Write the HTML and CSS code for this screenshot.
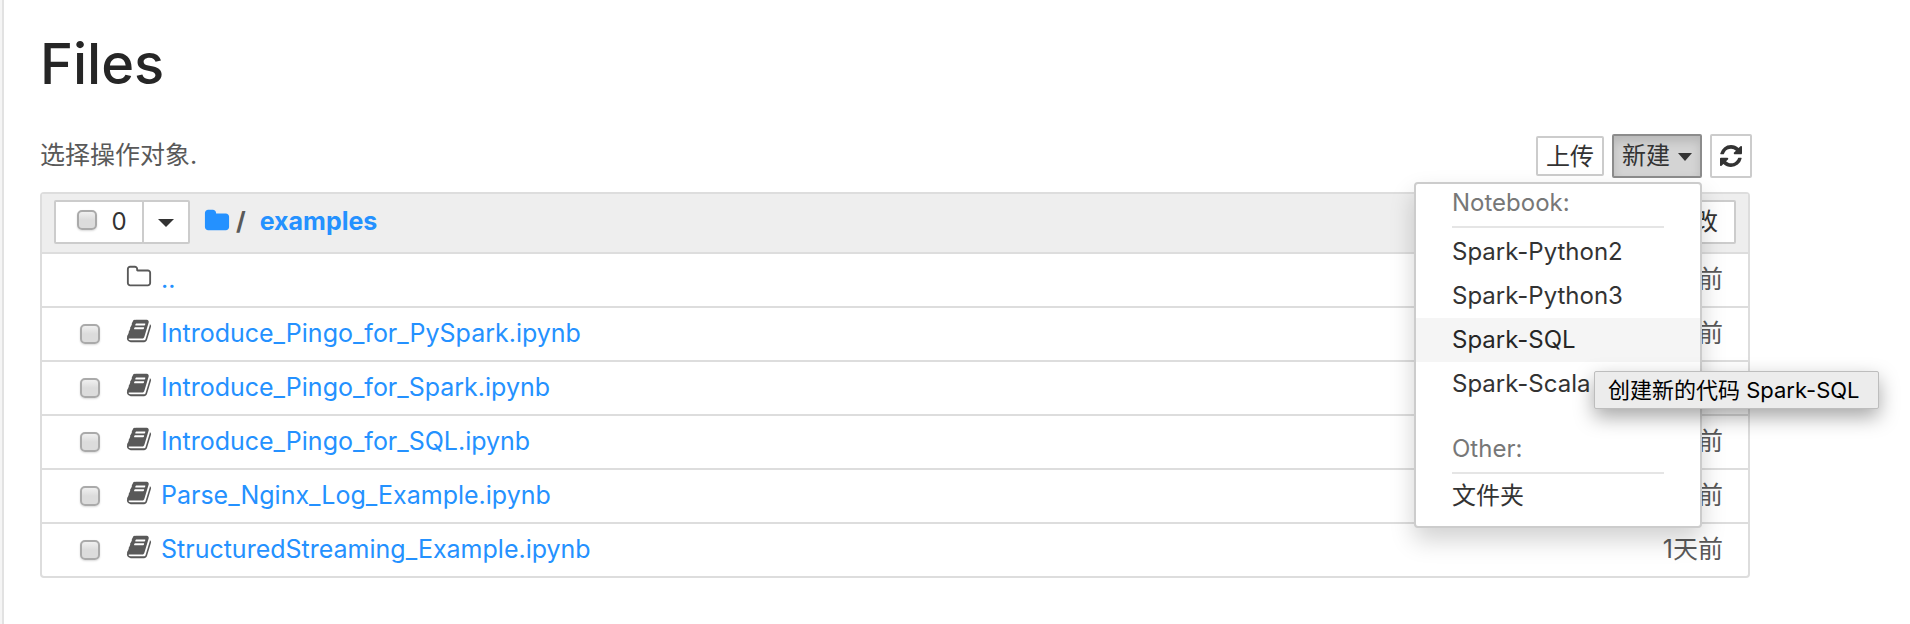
FILE: index.html
```html
<!DOCTYPE html>
<html lang="zh-CN">
<head>
<meta charset="utf-8">
<title>Files</title>
<link rel="stylesheet" href="styles.css">
</head>
<body>
<svg class="sprite" aria-hidden="true">
  <symbol id="folder" viewBox="0 0 1792 1792"><path d="M1728 608v704q0 92-66 158t-158 66h-1216q-92 0-158-66t-66-158v-960q0-92 66-158t158-66h320q92 0 158 66t66 158v32h672q92 0 158 66t66 158z"/></symbol>
  <symbol id="folder-open" viewBox="0 0 1792 1792"><path d="M1600 1312v-704q0-40-28-68t-68-28h-704q-40 0-68-28t-28-68v-64q0-40-28-68t-68-28h-320q-40 0-68 28t-28 68v960q0 40 28 68t68 28h1216q40 0 68-28t28-68zm128-704v704q0 92-66 158t-158 66h-1216q-92 0-158-66t-66-158v-960q0-92 66-158t158-66h320q92 0 158 66t66 158v32h672q92 0 158 66t66 158z"/></symbol>
  <symbol id="book" viewBox="0 0 1792 1792"><path d="M1703 478q40 57 18 129l-275 906q-19 64-76.500 107.500t-122.500 43.500h-923q-77 0-148.500-53.500t-99.500-131.500q-24-67-2-127 0-4 3-27t4-37q1-8-3-21.500t-3-19.500q2-11 8-21t16.500-23.500 16.500-23.500q23-38 45-91.500t30-91.500q3-10 .5-30t-.5-28q3-11 17-28t17-23q21-36 42-92t25-90q1-9-2.500-32t.5-28q4-13 22-30.500t22-22.500q19-26 42.500-84.500t27.500-96.500q1-8-3-25.500t-2-26.500q2-8 9-18t18-23 17-21q8-12 16.500-30.500t15-35 16-36 19.500-32 26.500-23.500 36-11.500 47.500 5.500l-1 3q38-9 51-9h761q74 0 114 56t18 130l-274 906q-36 119-71.500 153.500t-128.500 34.500h-869q-27 0-38 15-11 16-1 43 24 70 144 70h923q29 0 56-15.500t35-41.500l300-987q7-22 5-57 38 15 59 43zm-1064 2q-4 13 2 22.500t20 9.500h608q13 0 25.500-9.500t16.500-22.500l21-64q4-13-2-22.500t-20-9.500h-608q-13 0-25.500 9.500t-16.500 22.500zm-83 256q-4 13 2 22.500t20 9.500h608q13 0 25.500-9.500t16.500-22.500l21-64q4-13-2-22.500t-20-9.500h-608q-13 0-25.500 9.500t-16.500 22.500z"/></symbol>
  <symbol id="refresh" viewBox="0 0 1536 1536"><path d="M1511 928q0 5-1 7-64 268-268 434.500t-478 166.500q-146 0-282.500-55t-243.500-157l-129 129q-19 19-45 19t-45-19-19-45v-448q0-26 19-45t45-19h448q26 0 45 19t19 45-19 45l-137 137q71 66 161 102t187 36q134 0 250-65t186-179q11-17 53-117 8-23 30-23h192q13 0 22.500 9.500t9.500 22.500zm25-800v448q0 26-19 45t-45 19h-448q-26 0-45-19t-19-45 19-45l138-138q-148-137-349-137-134 0-250 65t-186 179q-11 17-53 117-8 23-30 23h-199q-13 0-22.500-9.500t-9.500-22.500v-7q65-268 270-434.500t480-166.500q146 0 284 55.500t245 156.500l130-129q19-19 45-19t45 19 19 45z"/></symbol>
</svg>
<main class="page">
  <h1 class="title">Files</h1>
  <div class="toolbar">
    <p class="hint">选择操作对象.</p>
    <div class="actions">
      <button class="btn btn-upload" type="button">上传</button>
      <div class="dropdown">
        <button class="btn btn-new" type="button" aria-expanded="true">新建<span class="caret"></span></button>
        <div class="menu">
          <div class="menu-head">Notebook:</div>
          <button class="menu-item" type="button">Spark-Python2</button>
          <button class="menu-item" type="button">Spark-Python3</button>
          <div class="menu-entry">
            <button class="menu-item is-hover" type="button" aria-describedby="tip">Spark-SQL</button>
            <div class="tip" id="tip" role="tooltip">创建新的代码 Spark-SQL</div>
          </div>
          <button class="menu-item" type="button">Spark-Scala</button>
          <div class="menu-head menu-head-other">Other:</div>
          <button class="menu-item" type="button">文件夹</button>
        </div>
      </div>
      <button class="btn btn-refresh" type="button" aria-label="刷新"><svg class="icon-refresh"><use href="#refresh"/></svg></button>
    </div>
  </div>
  <section class="list">
    <header class="list-head">
      <div class="select-group">
        <label class="btn select-all"><input class="check" type="checkbox"><span>0</span></label>
        <button class="btn select-menu" type="button" aria-label="选择"><span class="caret"></span></button>
      </div>
      <nav class="crumbs">
        <a href="#" aria-label="根目录"><svg class="icon"><use href="#folder"/></svg></a>
        <span class="slash">/</span>
        <a class="crumb" href="#">examples</a>
      </nav>
      <button class="btn sort" type="button">最后修改</button>
    </header>
    <div class="row"><span class="no-check"></span><svg class="icon"><use href="#folder-open"/></svg><a class="name" href="#">..</a><span class="time">1天前</span></div>
    <div class="row"><input class="check" type="checkbox" aria-label="Introduce_Pingo_for_PySpark.ipynb"><svg class="icon book"><use href="#book"/></svg><a class="name" href="#">Introduce_Pingo_for_PySpark.ipynb</a><span class="time">1天前</span></div>
    <div class="row"><input class="check" type="checkbox" aria-label="Introduce_Pingo_for_Spark.ipynb"><svg class="icon book"><use href="#book"/></svg><a class="name" href="#">Introduce_Pingo_for_Spark.ipynb</a><span class="time">1天前</span></div>
    <div class="row"><input class="check" type="checkbox" aria-label="Introduce_Pingo_for_SQL.ipynb"><svg class="icon book"><use href="#book"/></svg><a class="name" href="#">Introduce_Pingo_for_SQL.ipynb</a><span class="time">1天前</span></div>
    <div class="row"><input class="check" type="checkbox" aria-label="Parse_Nginx_Log_Example.ipynb"><svg class="icon book"><use href="#book"/></svg><a class="name" href="#">Parse_Nginx_Log_Example.ipynb</a><span class="time">1天前</span></div>
    <div class="row"><input class="check" type="checkbox" aria-label="StructuredStreaming_Example.ipynb"><svg class="icon book"><use href="#book"/></svg><a class="name" href="#">StructuredStreaming_Example.ipynb</a><span class="time">1天前</span></div>
  </section>
</main>
</body>
</html>
```

FILE: styles.css
```css
* { box-sizing: border-box; }
body {
  margin: 0;
  background: #f5f5f5;
  color: #595959;
  font: 25px/36px Inter, "Noto Sans CJK SC", sans-serif;
}
button { font: inherit; cursor: pointer; }
a { color: #2491ff; text-decoration: none; }
.sprite { position: absolute; width: 0; height: 0; }
.page {
  min-height: 100vh;
  margin-left: 2px;
  padding: 24px 158px 40px 36px;
  border-left: 2px solid #e2e2e2;
  background: #fff;
}
.title {
  margin: 0 0 30px;
  color: #262626;
  font-size: 56px;
  font-weight: 500;
  line-height: 80px;
}
.toolbar {
  display: flex;
  justify-content: space-between;
  align-items: center;
  height: 44px;
  margin-bottom: 14px;
}
.hint { margin: 0; padding-bottom: 2px; }
.actions { display: flex; align-items: center; gap: 8px; }
.btn {
  display: flex;
  align-items: center;
  justify-content: center;
  height: 44px;
  padding: 0 10px;
  border: 2px solid #ccc;
  border-radius: 2px;
  background: #fff;
  color: #333;
  font-size: 24px;
  line-height: 36px;
}
.btn-upload { height: 40px; padding: 2px 8px 0; }
.btn-new {
  gap: 8px;
  padding: 0 8px;
  border-color: #8c8c8c;
  background: #d4d4d4;
  box-shadow: inset 0 6px 10px rgba(0, 0, 0, .125);
}
.btn-refresh { width: 42px; padding: 0; }
.icon-refresh { width: 22px; height: 22px; fill: #333; }
.caret {
  margin-top: 2px;
  border: 8px solid transparent;
  border-top-color: #333;
  border-bottom: 0;
}
.btn-new .caret { border-width: 8px 7px 0; }
.dropdown { position: relative; }
.menu {
  position: absolute;
  z-index: 2;
  top: 48px;
  right: 0;
  width: 288px;
  padding-bottom: 8px;
  border: 2px solid #ccc;
  border-radius: 4px;
  background: #fff;
  background-clip: padding-box;
  box-shadow: 0 12px 24px rgba(0, 0, 0, .18);
  font-size: 24px;
}
.menu-head {
  margin: 0 36px 2px;
  padding-bottom: 4px;
  border-bottom: 2px solid #e5e5e5;
  color: #777;
  line-height: 38px;
}
.menu-head-other { margin: 24px 36px 0; }
.menu-entry { position: relative; }
.menu-item {
  display: block;
  width: 100%;
  height: 44px;
  padding: 0 36px;
  border: 0;
  background: none;
  color: #333;
  text-align: left;
}
.menu-item.is-hover { background: #f5f5f5; color: #262626; }
.tip {
  position: absolute;
  z-index: 3;
  top: 53px;
  left: 178px;
  padding: 0 18px 0 13px;
  border: 1px solid #bdbdbd;
  border-radius: 2px;
  background: #ececec;
  box-shadow: 0 8px 20px rgba(0, 0, 0, .35);
  color: #000;
  font-size: 22px;
  white-space: nowrap;
}
.list {
  margin-right: 2px;
  border: 2px solid #ddd;
  border-radius: 4px;
}
.list-head {
  display: flex;
  align-items: center;
  height: 58px;
  padding: 0 12px 2px;
  background: #eee;
}
.select-group { display: flex; }
.select-all { width: 90px; gap: 14px; padding: 0 16px 0 22px; }
.select-all .check { margin-bottom: 4px; }
.select-menu { width: 48px; margin-left: -2px; padding: 0; }
.crumbs {
  display: flex;
  align-items: center;
  margin-left: 14px;
  padding-bottom: 2px;
  font-weight: 700;
}
.crumbs a { display: flex; }
.crumbs .slash { margin: 0 14px 0 6px; }
.sort { margin-left: auto; padding: 0 16px; }
.check {
  appearance: none;
  flex: none;
  width: 20px;
  height: 20px;
  margin: 0;
  border: 2px solid #aaa;
  border-radius: 5px;
  background: linear-gradient(#f0f0f0, #dcdcdc 50%);
  box-shadow: 0 1px 2px rgba(0, 0, 0, .15);
}
.row {
  display: flex;
  align-items: center;
  height: 54px;
  padding: 0 25px 0 38px;
  border-top: 2px solid #ddd;
}
.no-check { width: 20px; }
.icon { flex: none; width: 26px; height: 26px; fill: #595959; }
.row .icon { margin: 0 9px 6px 26px; }
.crumbs .icon { fill: #2491ff; }
.name { padding-bottom: 2px; }
.time { margin-left: auto; padding-bottom: 2px; }
```
